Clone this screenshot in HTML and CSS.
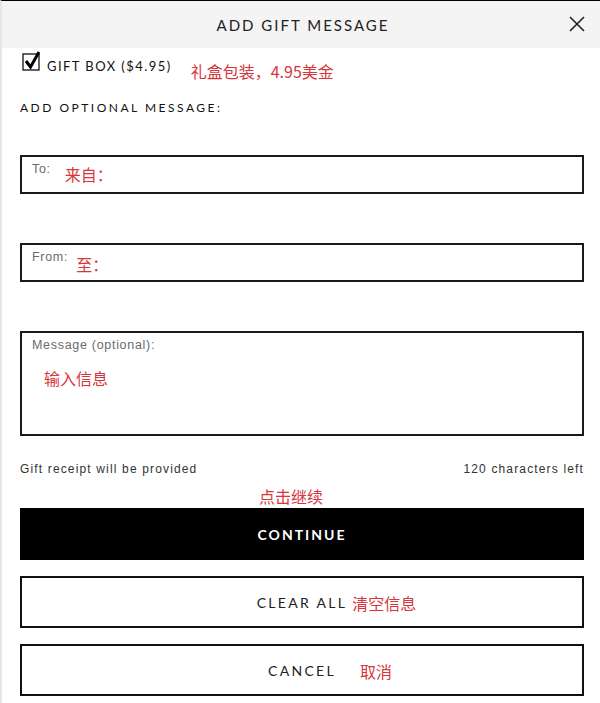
FILE: index.html
```html
<!DOCTYPE html>
<html lang="en">
<head>
    <meta charset="UTF-8">
    <meta name="viewport" content="width=device-width, initial-scale=1.0">
    <title>Add Gift Message</title>
    <link rel="stylesheet" href="styles.css">
</head>
<body>
    <div class="modal">
        <header class="modal-header">
            <h1>ADD GIFT MESSAGE</h1>
            <a href="#" class="close" aria-label="Close">
                <svg width="18" height="18" viewBox="0 0 18 18">
                    <path d="M2 2 L16 16 M16 2 L2 16" stroke="#222" stroke-width="1.6" fill="none"/>
                </svg>
            </a>
        </header>

        <div class="modal-body">
            <div class="gift-box">
                <span class="checkbox">
                    <svg width="20" height="20" viewBox="0 0 20 20">
                        <rect x="1" y="3" width="16" height="16" fill="#fff" stroke="#111" stroke-width="1.3"/>
                        <path d="M4 10 L8.5 16 L17 1" stroke="#000" stroke-width="3" fill="none"/>
                    </svg>
                </span>
                <span class="gift-label">GIFT BOX ($4.95)</span>
                <span class="note note-gift">礼盒包装，4.95美金</span>
            </div>

            <h2 class="section-title">ADD OPTIONAL MESSAGE:</h2>

            <div class="field field-to">
                <span class="field-label">To:</span>
                <span class="note">来自：</span>
            </div>

            <div class="field field-from">
                <span class="field-label">From:</span>
                <span class="note">至：</span>
            </div>

            <div class="field field-message">
                <span class="field-label">Message (optional):</span>
                <span class="note note-message">输入信息</span>
            </div>

            <div class="meta">
                <span>Gift receipt will be provided</span>
                <span>120 characters left</span>
            </div>

            <div class="note note-continue">点击继续</div>

            <a href="#" class="btn btn-primary"><span>CONTINUE</span></a>
            <a href="#" class="btn btn-outline">
                <span class="btn-text">CLEAR ALL<span class="note btn-note">清空信息</span></span>
            </a>
            <a href="#" class="btn btn-outline">
                <span class="btn-text">CANCEL<span class="note btn-note btn-note-far">取消</span></span>
            </a>
        </div>
    </div>
</body>
</html>
```

FILE: styles.css
```css
:root {
    --ink: #111;
    --muted: #6b6b6b;
    --note-red: #d7363d;
    --header-bg: #f4f4f4;
}

* {
    margin: 0;
    padding: 0;
    box-sizing: border-box;
}

body {
    background: #fff;
    font-family: "Liberation Sans", Arial, sans-serif;
    color: var(--ink);
}

.modal {
    width: 600px;
    min-height: 703px;
    border-top: 1px solid #000;
    border-left: 2px solid #e6e6e6;
}

.modal-header {
    height: 47px;
    background: var(--header-bg);
    display: flex;
    align-items: center;
    justify-content: center;
    position: relative;
}

.modal-header h1 {
    font-family: "Lato", sans-serif;
    font-weight: 400;
    font-size: 15px;
    letter-spacing: 2px;
    color: #222;
    margin-left: 4px;
}

.close {
    position: absolute;
    right: 14px;
    top: 14px;
    display: flex;
}

.modal-body {
    padding: 0 16px 0 18px;
    display: flex;
    flex-direction: column;
}

.note {
    font-family: "Noto Sans CJK SC", sans-serif;
    color: var(--note-red);
    font-size: 16px;
    line-height: 1;
}

.gift-box {
    display: flex;
    align-items: flex-start;
    margin-top: 3px;
    height: 34px;
}

.checkbox {
    display: flex;
    margin-left: 2px;
}

.gift-label {
    font-family: "Lato", sans-serif;
    font-size: 13px;
    letter-spacing: 1.45px;
    margin: 7px 0 0 5px;
    color: #111;
}

.note-gift {
    margin: 12px 0 0 19px;
}

.section-title {
    font-family: "Lato", sans-serif;
    font-weight: 400;
    font-size: 12px;
    letter-spacing: 2.5px;
    color: #111;
    margin-top: 15px;
}

.field {
    border: 2px solid #1a1a1a;
    height: 39px;
    display: flex;
    align-items: flex-start;
    padding: 5px 10px;
}

.field-to {
    margin-top: 40px;
}

.field-from,
.field-message {
    margin-top: 49px;
}

.field-label {
    font-size: 12.5px;
    letter-spacing: 0.7px;
    color: var(--muted);
    margin-right: 14px;
}

.field .note {
    margin-top: 4px;
}

.field-from .field-label {
    margin-right: 8px;
}

.field-from .note {
    margin-top: 6px;
}

.field-message {
    height: 105px;
    flex-direction: column;
}

.field-message .note-message {
    margin: 18px 0 0 12px;
}

.meta {
    display: flex;
    justify-content: space-between;
    font-size: 12px;
    letter-spacing: 1.15px;
    color: #333;
    margin-top: 26px;
}

.note-continue {
    align-self: center;
    margin: 12px 0 0 -22px;
}

.btn {
    display: flex;
    align-items: center;
    justify-content: center;
    height: 52px;
    text-decoration: none;
    font-family: "Lato", sans-serif;
    font-size: 14px;
    letter-spacing: 2.3px;
}

.btn-primary {
    background: #000;
    color: #fff;
    font-weight: 700;
    letter-spacing: 2px;
    margin-top: 4px;
}

.btn-outline {
    border: 2px solid #111;
    color: #222;
    margin-top: 16px;
}

.btn-text {
    position: relative;
}

.btn-note {
    position: absolute;
    left: 100%;
    top: 1px;
    margin-left: 5px;
    white-space: nowrap;
    letter-spacing: 0;
}

.btn-note-far {
    margin-left: 24px;
}
```
